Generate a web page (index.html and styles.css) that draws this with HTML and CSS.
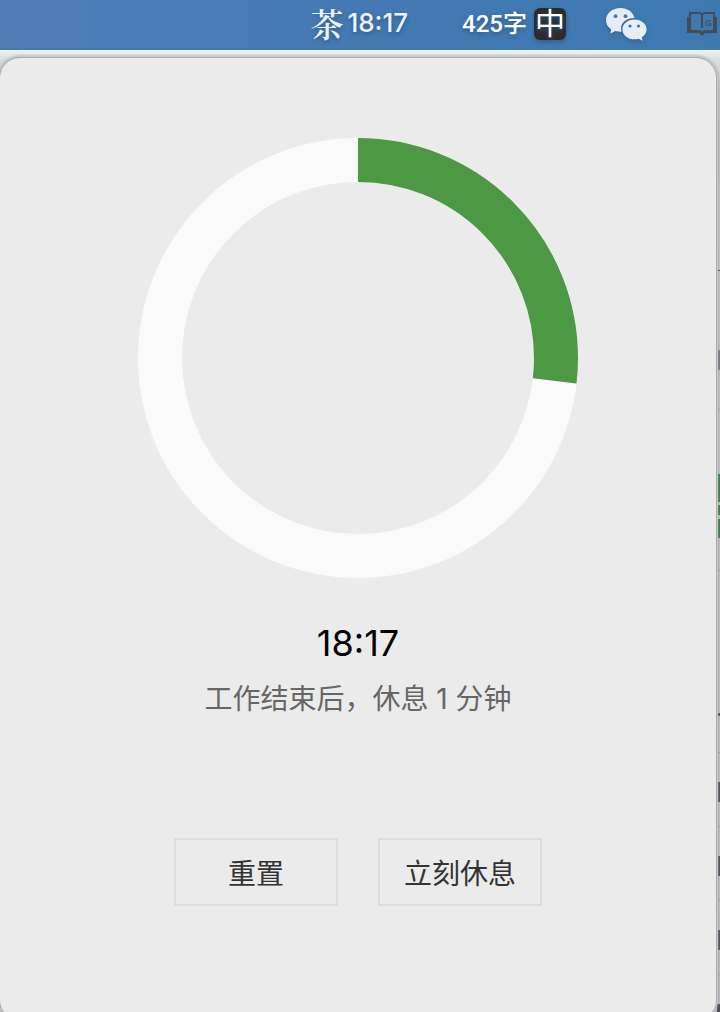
FILE: index.html
```html
<!DOCTYPE html>
<html lang="zh-CN">
<head>
<meta charset="utf-8">
<meta name="viewport" content="width=device-width, initial-scale=1">
<title>茶</title>
<link rel="stylesheet" href="styles.css">
</head>
<body>
<header class="menubar">
  <div class="status timer"><span class="tea">茶</span><span>18:17</span></div>
  <div class="status input-method"><span>425字</span><span class="mode">中</span></div>
  <svg class="wechat" width="42" height="34" viewBox="0 0 42 34" aria-label="微信">
    <path fill="#e7edf4" d="M14.500 1C6.500 1 0 6.400 0 13.200c0 3.800 2 7 5.200 9.200L4.400 26.400l5-2.500c2 .6 4 .9 6.200.8A11.500 11.500 0 0 1 15 21.500C15 15.500 20.700 11 28.500 11C27.200 5.300 21.500 1 14.500 1z"/>
    <path fill="#e7edf4" d="M28.500 12.500c-6.700 0-12.100 4.400-12.100 9.900s5.400 9.900 12.100 9.900c1.500 0 2.900-.2 4.200-.6l3.900 2-.8-3.500c2.900-1.800 4.800-4.600 4.800-7.800c0-5.500-5.400-9.900-12.100-9.900z"/>
    <g fill="#3f78b2"><circle cx="9.500" cy="9.200" r="1.900"/><circle cx="19.500" cy="9.200" r="1.900"/><circle cx="24" cy="19" r="1.600"/><circle cx="32.500" cy="19" r="1.600"/></g>
  </svg>
  <svg class="book" width="30" height="26" viewBox="0 0 30 26" aria-label="词典">
    <path fill="none" stroke="#454c55" stroke-width="2" d="M15 4.500Q14 3 11.500 3H3v18h10l2 2 2-2h10V3h-8.500Q16 3 15 4.500V18"/>
    <path fill="#454c55" d="M0 7h3v14h10l2 1 2-1h10V7h3v16H18l-3 3-3-3H0z"/>
    <text class="book-letter" x="18" y="16">G</text>
  </svg>
</header>
<main class="desktop">
  <svg class="backdrop" width="4" height="954" aria-hidden="true">
    <path fill="#bebfc6" d="M0 60h4v64H0z"/>
    <path fill="#737680" d="M2 292h2v20H2z"/>
    <path fill="#38793f" d="M2 416h2v28H2zM2 447h2v10H2zM2 461h2v19H2z"/>
    <path fill="#4b4f59" d="M2 212h2v1H2zM2 655h2v3H2zM2 724h2v20H2zM2 798h2v20H2zM2 872h2v20H2zM1 946h3v8H1z"/>
    <path fill="#9aa1ad" d="M2 351h2v1H2zM2 512h2v1H2zM2 694h2v1H2zM2 768h2v1H2zM2 842h2v1H2zM2 916h2v1H2z"/>
  </svg>
  <section class="popover">
    <svg class="dial" viewBox="0 0 440 440" role="img" aria-label="剩余时间">
      <circle class="track" cx="220" cy="220" r="198"/>
      <circle class="progress" cx="220" cy="220" r="198" pathLength="1000" transform="rotate(-90 220 220)"/>
    </svg>
    <h1 class="time">18:17</h1>
    <p class="note">工作结束后，休息 1 分钟</p>
    <div class="actions">
      <button class="action" type="button">重置</button>
      <button class="action" type="button">立刻休息</button>
    </div>
  </section>
</main>
</body>
</html>
```
FILE: styles.css
```css
* { box-sizing: border-box; }
body {
  margin: 0;
  min-height: 100vh;
  display: flex;
  flex-direction: column;
  overflow: hidden;
  font-family: Inter, "Noto Sans CJK SC", sans-serif;
}
.menubar {
  height: 50px;
  flex: none;
  display: flex;
  align-items: center;
  justify-content: flex-end;
  padding-right: 3px;
  border-bottom: 2px solid #3d7daf;
  background: linear-gradient(90deg, #507eb6, #4479b3 50%, #3d79b0);
  color: #fff;
  white-space: nowrap;
}
.status {
  display: flex;
  align-items: center;
  font-weight: 500;
  line-height: 34px;
  text-shadow: 0 2px 4px #2c598a;
}
.timer {
  gap: 4px;
  margin-right: 54px;
  padding-bottom: 2px;
  font-size: 26px;
  color: #edf2f8;
}
.tea {
  font-family: "Noto Serif CJK SC", "Noto Sans CJK SC", serif;
  font-size: 33px;
  font-weight: 600;
}
.input-method {
  gap: 7px;
  margin-right: 40px;
  font-family: Roboto, "Noto Sans CJK SC", sans-serif;
  font-size: 24px;
}
.mode {
  width: 32px;
  height: 32px;
  border-radius: 6px;
  background: #2b2b2c;
  box-shadow: 0 2px 4px #315f91;
  font-size: 30px;
  line-height: 32px;
  text-align: center;
  font-weight: 400;
}
.wechat {
  margin-right: 39px;
  filter: drop-shadow(0 2px 2px #34669a);
}
.book {
  margin-bottom: 2px;
}
.book-letter {
  font: bold 9px "Liberation Sans", sans-serif;
  fill: #454c55;
}
.desktop {
  position: relative;
  flex: 1;
  display: flex;
  padding: 8px 4px 0 0;
  background: linear-gradient(#f2f2f3, #dcdde1 10px, #c4c5ca 40px, #babbc0);
}
.backdrop {
  position: absolute;
  top: 8px;
  right: 0;
}
.popover {
  position: relative;
  flex: 1;
  display: flex;
  flex-direction: column;
  align-items: center;
  margin-bottom: -8px;
  padding: 80px 0 114px;
  border-radius: 20px;
  background: #ebebeb;
  box-shadow: 0 0 0 1px #a9aaac, 0 0 0 2px #c9cacc, 0 0 3px 2px #9b9ca0;
}
.dial {
  width: 440px;
  max-width: 100%;
}
.track, .progress {
  fill: none;
  stroke: #fafafa;
  stroke-width: 44;
}
.progress {
  stroke: #4c9843;
  stroke-dasharray: 268.500 1000;
}
.time {
  margin: 40px 0 0;
  font-size: 36px;
  font-weight: 400;
  line-height: 50px;
  color: #000;
}
.note {
  margin: 11px 0 0;
  font-size: 28px;
  line-height: 40px;
  color: #666;
}
.actions {
  display: flex;
  gap: 40px;
  margin-top: 119px;
}
.action {
  width: 164px;
  height: 68px;
  padding: 0;
  border: 2px solid #dcdcdc;
  background: transparent;
  font-family: inherit;
  font-size: 28px;
  color: #333;
}
```
